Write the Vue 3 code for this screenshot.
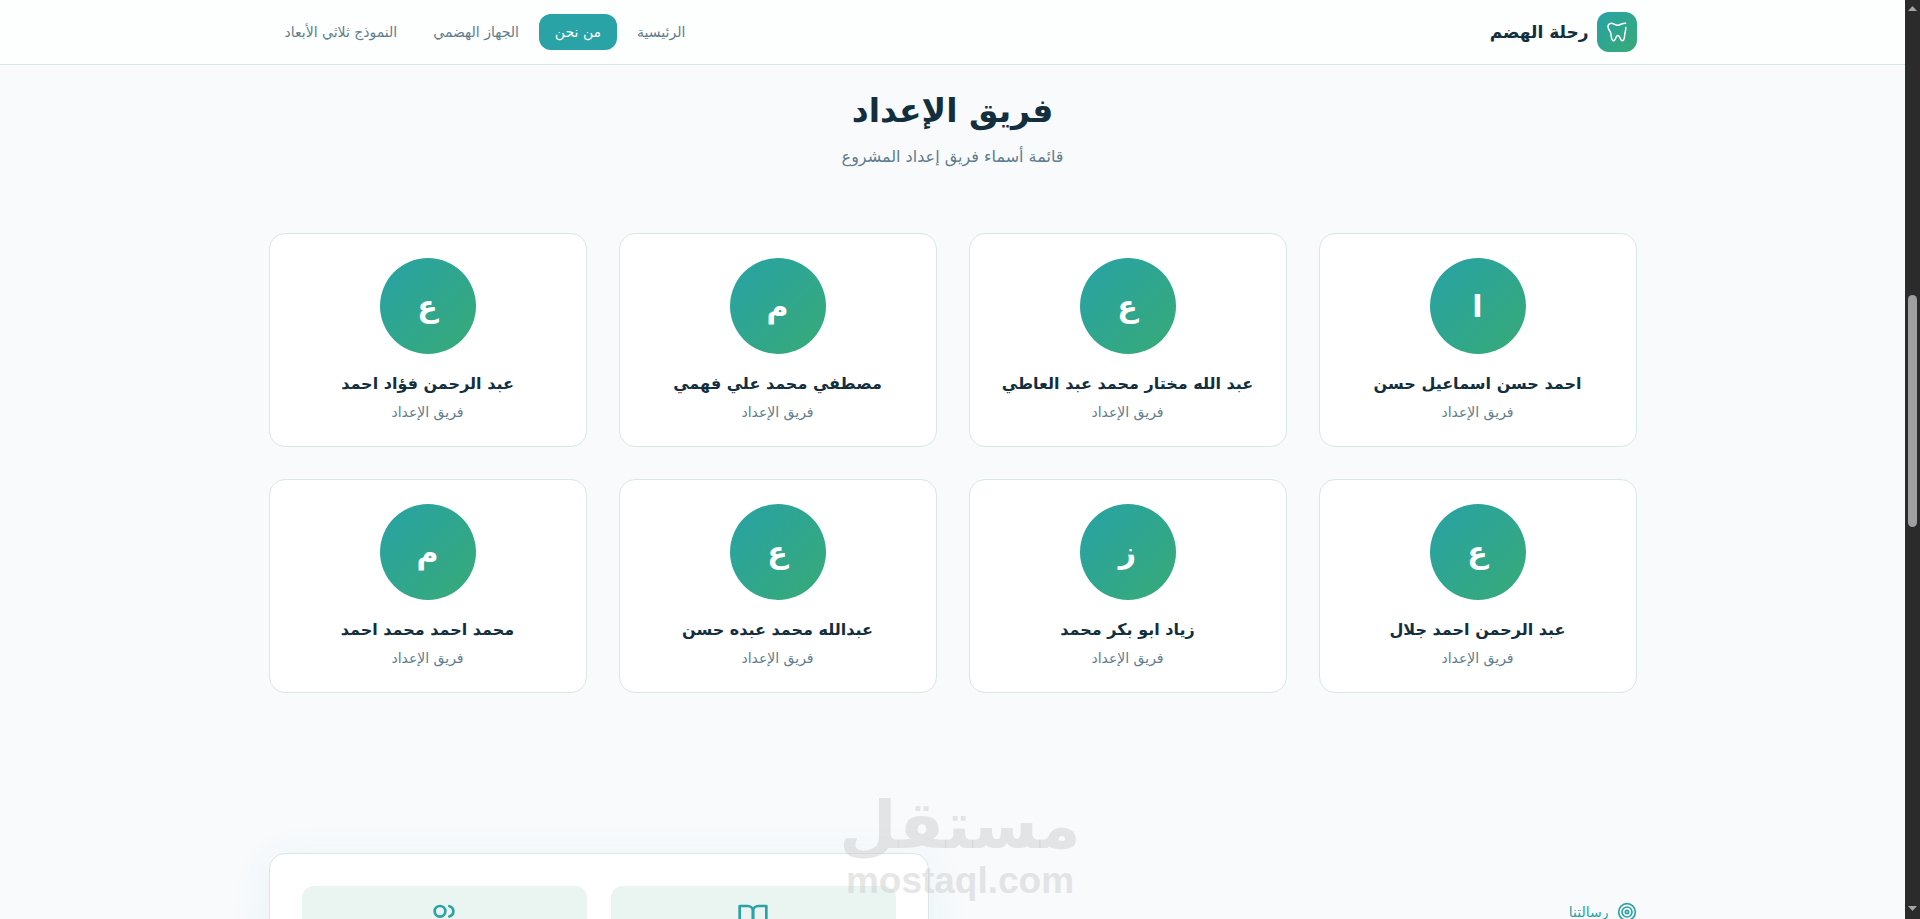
<script setup>
import { ref } from 'vue'

const links = ['الرئيسية', 'من نحن', 'الجهاز الهضمي', 'النموذج ثلاثي الأبعاد']
const current = ref('من نحن')

const team = [
  'احمد حسن اسماعيل حسن',
  'عبد الله مختار محمد عبد العاطي',
  'مصطفي محمد علي فهمي',
  'عبد الرحمن فؤاد احمد',
  'عبد الرحمن احمد جلال',
  'زياد ابو بكر محمد',
  'عبدالله محمد عبده حسن',
  'محمد احمد محمد احمد'
]
</script>

<template>
  <div class="screen">
    <div class="page" dir="rtl" lang="ar">
      <header class="header">
        <div class="container header_row">
          <a class="brand" href="#">
            <span class="brand_icon">
              <svg viewBox="0 0 20 20" width="20" height="20">
                <path d="M18.6 1.2C15 1 14 2.8 11 3.2 8 3.4 6.5 1 3.6 1.4 1 1.8.6 4.4 1.4 6.6c.6 1.8 2 2.4 2.4 4.8.4 3 .6 7.2 2.6 7.4 2.6.2 1.8-5.4 4.6-5.4 2.4 0 1.8 5.4 4.4 5.4 2-.2 2.2-3.8 2.4-6.8.2-2.4 1.2-4 1-6.6" />
              </svg>
            </span>
            <span class="brand_name">رحلة الهضم</span>
          </a>
          <nav class="nav">
            <a
              v-for="link in links"
              :key="link"
              href="#"
              :class="{ active: current === link }"
              @click.prevent="current = link">{{ link }}</a>
          </nav>
        </div>
      </header>

      <main class="container">
        <section class="team">
          <h1>فريق الإعداد</h1>
          <p class="lead">قائمة أسماء فريق إعداد المشروع</p>
          <div class="grid">
            <article v-for="name in team" :key="name" class="card">
              <div class="avatar">{{ name[0] }}</div>
              <h2>{{ name }}</h2>
              <p>فريق الإعداد</p>
            </article>
          </div>
        </section>

        <section class="mission">
          <div class="mission_text">
            <svg class="icon" viewBox="0 0 24 24" width="20" height="20">
              <circle cx="12" cy="12" r="10" />
              <circle cx="12" cy="12" r="6" />
              <circle cx="12" cy="12" r="2" />
            </svg>
            <span>رسالتنا</span>
          </div>
          <div class="panel">
            <div class="tile">
              <svg class="icon" viewBox="0 0 24 24" width="32" height="32">
                <path d="M2 3h6a4 4 0 0 1 4 4v14a3 3 0 0 0-3-3H2z" />
                <path d="M22 3h-6a4 4 0 0 0-4 4v14a3 3 0 0 1 3-3h7z" />
              </svg>
            </div>
            <div class="tile">
              <svg class="icon" viewBox="0 0 24 24" width="32" height="32">
                <path d="M16 21v-2a4 4 0 0 0-4-4H6a4 4 0 0 0-4 4v2" />
                <circle cx="9" cy="7" r="4" />
                <path d="M22 21v-2a4 4 0 0 0-3-3.87" />
                <path d="M16 3.13a4 4 0 0 1 0 7.75" />
              </svg>
            </div>
          </div>
        </section>
      </main>
    </div>

    <div class="scrollbar">
      <span class="arrow up"></span>
      <span class="thumb"></span>
      <span class="arrow down"></span>
    </div>

    <div class="watermark">
      <span class="mark_ar" lang="ar">مستقل</span>
      <span class="mark_en">mostaql.com</span>
    </div>
  </div>
</template>

<style>
body {
  margin: 0;
  background: #f8fafc;
}
</style>

<style scoped>
* {
  box-sizing: border-box;
}
.screen {
  position: relative;
  display: flex;
  height: 100vh;
  overflow: hidden;
  color: #132f3e;
  font-family: "DejaVu Sans", sans-serif;
}
.page {
  flex: 1;
  min-width: 0;
  background: #f8fafc;
}
.container {
  max-width: 1400px;
  margin: 0 auto;
  padding: 0 16px;
}
h1, h2, p {
  margin: 0;
}

.header {
  background: #fdfefe;
  border-bottom: 1px solid #d7e8e5;
}
.header_row {
  display: flex;
  align-items: center;
  justify-content: space-between;
  height: 64px;
}
.brand {
  display: flex;
  align-items: center;
  gap: 8px;
  color: inherit;
  text-decoration: none;
}
.brand_icon {
  display: flex;
  align-items: center;
  justify-content: center;
  width: 40px;
  height: 40px;
  border-radius: 12px;
  background: linear-gradient(135deg, #27a2a6, #38aa76);
}
.brand_icon svg {
  fill: none;
  stroke: #fff;
  stroke-width: 1.5;
  stroke-linecap: round;
  stroke-linejoin: round;
}
.brand_name {
  font-size: 17px;
  font-weight: 700;
}
.nav {
  display: flex;
  gap: 4px;
}
.nav a {
  padding: 0 16px;
  border-radius: 12px;
  color: #607d8d;
  font-size: 14px;
  line-height: 36px;
  text-decoration: none;
}
.nav .active {
  background: #29a3a5;
  color: #fff;
}

.team {
  padding-top: 20px;
  text-align: center;
}
h1 {
  font-size: 33px;
  line-height: 52px;
}
.lead {
  margin-top: 8px;
  color: #607d8d;
  font-size: 16px;
  line-height: 24px;
}
.grid {
  display: grid;
  grid-template-columns: repeat(4, 1fr);
  gap: 32px;
  margin-top: 64px;
}
.card {
  padding: 24px 24px 20px;
  border: 1px solid #d7e8e5;
  border-radius: 16px;
  background: #fff;
}
.avatar {
  display: flex;
  align-items: center;
  justify-content: center;
  width: 96px;
  height: 96px;
  margin: 0 auto 16px;
  border-radius: 50%;
  background: linear-gradient(135deg, #27a2a6, #38aa76);
  color: #fff;
  font-size: 30px;
  font-weight: 700;
}
.card h2 {
  font-size: 16px;
  line-height: 28px;
  white-space: nowrap;
}
.card p {
  margin-top: 4px;
  padding-bottom: 4px;
  color: #607d8d;
  font-size: 14px;
  line-height: 20px;
}

.mission {
  display: grid;
  grid-template-columns: 1fr 1fr;
  gap: 48px;
  margin-top: 160px;
}
.mission_text {
  display: flex;
  align-items: center;
  align-self: start;
  gap: 8px;
  height: 24px;
  margin-top: 47px;
  color: #29a3a5;
  font-size: 14px;
}
.panel {
  display: grid;
  grid-template-columns: 1fr 1fr;
  gap: 24px;
  padding: 32px;
  border: 1px solid #d7e8e5;
  border-radius: 16px;
  background: #fff;
  box-shadow: 0 8px 40px rgba(41, 163, 165, .08);
}
.tile {
  min-height: 128px;
  padding: 16px;
  border-radius: 12px;
  background: #eaf5f2;
  text-align: center;
}
.icon {
  fill: none;
  stroke: #29a3a5;
  stroke-width: 2;
  stroke-linecap: round;
  stroke-linejoin: round;
}

.scrollbar {
  display: grid;
  grid-template-rows: 289fr 232fr 384fr;
  justify-items: center;
  flex: none;
  width: 15px;
  padding: 6px 0 8px;
  background: #2b2b2b;
}
.thumb {
  width: 9px;
  border-radius: 5px;
  background: #9f9fa1;
}
.arrow {
  width: 9px;
  height: 5px;
  background: #a5a5a5;
}
.up {
  clip-path: polygon(50% 0, 100% 100%, 0 100%);
}
.down {
  align-self: end;
  clip-path: polygon(0 0, 100% 0, 50% 100%);
}

/* stamp over the bottom of the page */
.watermark {
  position: absolute;
  right: 0;
  bottom: 18px;
  left: 0;
  display: flex;
  flex-direction: column;
  align-items: center;
  color: rgba(205, 205, 205, .5);
  font-weight: 700;
  pointer-events: none;
}
.mark_ar {
  font-size: 66px;
  line-height: 70px;
}
.mark_en {
  font-family: "Liberation Sans", sans-serif;
  font-size: 37px;
  line-height: 40px;
}
</style>
